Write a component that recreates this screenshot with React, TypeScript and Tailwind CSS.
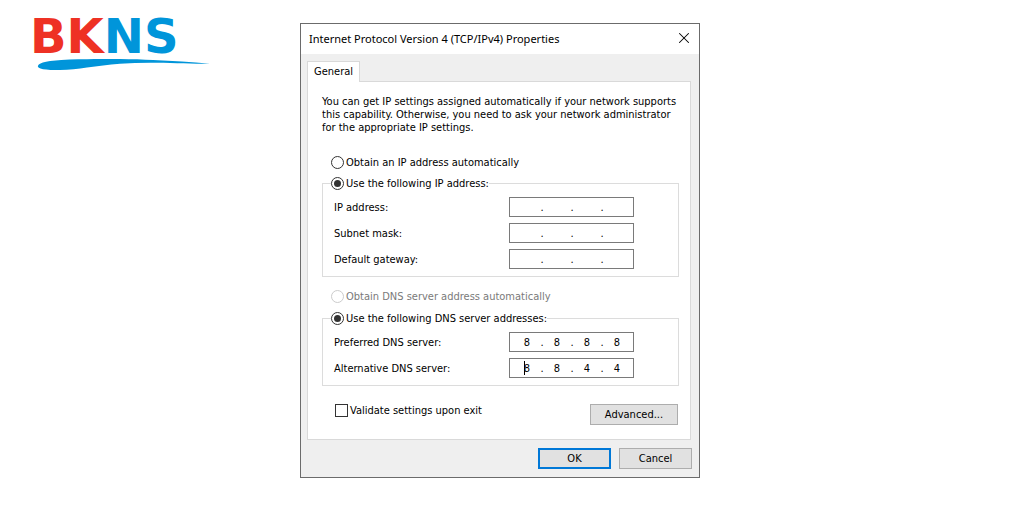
import { X } from "lucide-react";

const ipFields = [
    { id: "ip-address", label: "IP address:", value: ["", "", "", ""] },
    { id: "subnet-mask", label: "Subnet mask:", value: ["", "", "", ""] },
    { id: "default-gateway", label: "Default gateway:", value: ["", "", "", ""] },
];

const dnsFields = [
    { id: "preferred-dns", label: "Preferred DNS server:", value: ["8", "8", "8", "8"] },
    { id: "alternative-dns", label: "Alternative DNS server:", value: ["8", "8", "4", "4"], active: true },
];

type Field = { id: string; label: string; value: string[]; active?: boolean };

function Logo() {
    return (
        <div className="flex flex-col items-start pt-5 pl-[30px]">
            <span className="font-['DejaVu_Sans',sans-serif] text-5xl leading-8 font-bold">
                <span className="text-[#ee3124]">BK</span>
                <span className="text-[#0095da]">NS</span>
            </span>
            {/* Swoosh under the letters */}
            <svg className="ml-[6px] mt-[7px] h-3 w-[175px]" viewBox="0 0 175 12" fill="#0095da">
                <path d="M2 6.7C3 4 9 2.4 17 1.7C28 .6 39 .3 51 .2C62 0 73 -.1 84 0C96 .1 107 .5 117 1.1C137 2.1 155 3.2 174 4.7C164 4.9 152 4.6 141 4.3C121 3.7 102 3.6 84 4.7C72 5.5 62 7 51 8.4C42 9.7 33 10.8 24 11C15 11.3 8 10.8 4.5 9.6C2.5 8.8 1.5 7.8 2 6.7Z" />
            </svg>
        </div>
    );
}

// Round option; the selected one shows a dark inner dot
function Option({ id, name, label, checked, disabled }: { id: string; name: string; label: string; checked?: boolean; disabled?: boolean }) {
    return (
        <div className="flex h-[13px] items-center gap-[2px]">
            <input
                id={id}
                type="radio"
                name={name}
                defaultChecked={checked}
                disabled={disabled}
                className="size-[13px] shrink-0 appearance-none rounded-full border border-[#333333] bg-white checked:bg-[#333333] checked:bg-clip-content checked:p-[2px] disabled:border-[#cccccc]"
            />
            <label htmlFor={id} className={disabled ? "text-[#7a7a7a]" : ""}>
                {label}
            </label>
        </div>
    );
}

function AddressRow({ field }: { field: Field }) {
    return (
        <div className="flex h-5 items-center">
            <label htmlFor={field.id} className="w-[175px]">
                {field.label}
            </label>
            <div className="relative flex h-5 w-[125px] items-center border border-[#7a7a7a] bg-white pl-1">
                {field.value.map((part, index) => (
                    <div key={index} className="flex items-center">
                        <input
                            id={index === 0 ? field.id : `${field.id}-${index}`}
                            aria-label={index === 0 ? undefined : `${field.label} ${index + 1}`}
                            type="text"
                            maxLength={3}
                            defaultValue={part}
                            className="w-[26px] bg-transparent text-center outline-none"
                        />
                        {index < 3 && <span className="w-1 text-center">.</span>}
                    </div>
                ))}
                {field.active && <span className="absolute top-[2px] left-[14px] h-[14px] w-px bg-black" />}
            </div>
        </div>
    );
}

export default function App() {
    return (
        <main className="grid grid-cols-[25fr_minmax(0,400px)_27fr] items-start bg-white font-['DejaVu_Sans_Condensed',Tahoma,sans-serif] text-[11px] leading-[13px] text-black">
            <Logo />

            <section className="mt-[23px] border border-[#6b6b6b] bg-[#efefef]">
                {/* Title bar */}
                <header className="flex h-[30px] items-center justify-between bg-white px-2 pb-[2px]">
                    <h1 className="font-['Noto_Sans',sans-serif]">Internet Protocol Version 4 (TCP/IPv4) Properties</h1>
                    <button type="button" aria-label="Close" className="flex size-[14px] items-center justify-center">
                        <X className="size-[18px] shrink-0" strokeWidth={1.4} />
                    </button>
                </header>

                <div className="pt-[7px] pr-2 pl-[6px]">
                    <div role="tablist" className="flex">
                        <button type="button" role="tab" aria-selected="true" className="relative z-10 -mb-px h-[21px] border border-b-0 border-[#d9d9d9] bg-white px-[6px] pb-[2px]">
                            General
                        </button>
                    </div>

                    <form id="properties" className="border border-[#d9d9d9] bg-white pt-[13px] pr-[11px] pb-[14px] pl-[14px]">
                        <p>
                            You can get IP settings assigned automatically if your network supports
                            <br />
                            this capability. Otherwise, you need to ask your network administrator
                            <br />
                            for the appropriate IP settings.
                        </p>

                        <div className="mt-[22px] mb-2 pl-[9px]">
                            <Option id="ip-auto" name="ip" label="Obtain an IP address automatically" />
                        </div>
                        <fieldset className="flex flex-col gap-[6px] border border-[#dcdcdc] pt-[7px] pb-[7px] pl-[11px]">
                            <legend className="-ml-[3px]">
                                <Option id="ip-manual" name="ip" label="Use the following IP address:" checked />
                            </legend>
                            {ipFields.map((field) => (
                                <AddressRow key={field.id} field={field} />
                            ))}
                        </fieldset>

                        <div className="mt-[13px] mb-[9px] pl-[9px]">
                            <Option id="dns-auto" name="dns" label="Obtain DNS server address automatically" disabled />
                        </div>
                        <fieldset className="flex flex-col gap-[6px] border border-[#dcdcdc] pt-[7px] pb-[7px] pl-[11px]">
                            <legend className="-ml-[3px]">
                                <Option id="dns-manual" name="dns" label="Use the following DNS server addresses:" checked />
                            </legend>
                            {dnsFields.map((field) => (
                                <AddressRow key={field.id} field={field} />
                            ))}
                        </fieldset>

                        <div className="mt-[18px] flex items-start justify-between pr-px pl-[13px]">
                            <div className="flex items-center gap-[2px]">
                                <input id="validate" type="checkbox" className="size-[13px] appearance-none border border-[#333333] bg-white checked:bg-[#333333]" />
                                <label htmlFor="validate">Validate settings upon exit</label>
                            </div>
                            <button type="button" className="h-[21px] w-[88px] border border-[#adadad] bg-[#e1e1e1]">
                                Advanced...
                            </button>
                        </div>
                    </form>
                </div>

                <footer className="flex justify-end gap-2 px-[7px] py-2">
                    <button type="submit" form="properties" className="h-[21px] w-[73px] border-2 border-[#0078d7] bg-[#e1e1e1]">
                        OK
                    </button>
                    <button type="button" className="h-[21px] w-[73px] border border-[#adadad] bg-[#e1e1e1]">
                        Cancel
                    </button>
                </footer>
            </section>
        </main>
    );
}
